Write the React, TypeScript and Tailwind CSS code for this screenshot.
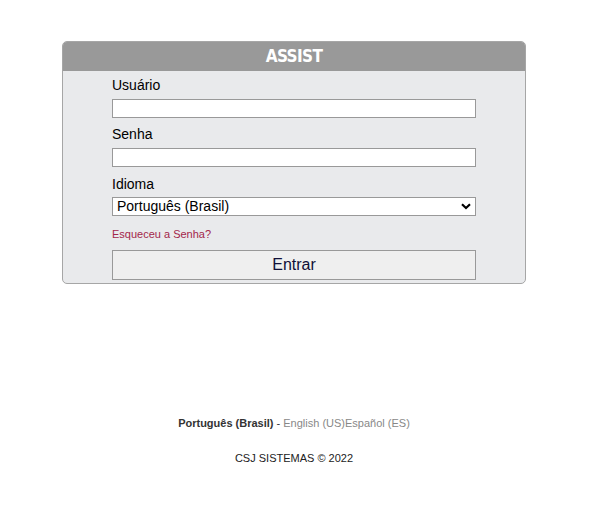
import React from 'react';

const App = () => {
  return (
    <div className="min-h-[532px] w-full bg-white font-['Liberation_Sans',Arial,sans-serif] text-black">
      <div className="pt-[41px]">
        {/* Login card */}
        <div className="ml-[62px] w-[464px] rounded-[5px] border border-[#a6a6a6] bg-[#e9eaec] overflow-hidden">
          <div className="h-[29px] bg-[#999999] flex items-center justify-center">
            <span className="font-['DejaVu_Sans_Condensed','DejaVu_Sans',sans-serif] font-bold text-[17px] text-white tracking-[-0.6px] leading-none">
              ASSIST
            </span>
          </div>
          <form className="px-[49px] pt-[6px] pb-[3px] flex flex-col" onSubmit={(e) => e.preventDefault()}>
            <label className="text-[14px] leading-[17px] h-[17px]">Usuário</label>
            <input type="text" className="mt-[5px] h-[19px] w-full bg-white border border-[#999] outline-none" />
            <label className="mt-[8px] text-[14px] leading-[17px] h-[17px]">Senha</label>
            <input type="password" className="mt-[5px] h-[19px] w-full bg-white border border-[#999] outline-none" />
            <label className="mt-[9px] text-[14px] leading-[17px] h-[17px]">Idioma</label>
            <div className="relative mt-[4px] h-[19px] w-full bg-white border border-[#999]">
              <span className="absolute left-[4px] top-0 text-[14px] leading-[17px] text-black">Português (Brasil)</span>
              <svg className="absolute right-[4px] top-[5px]" width="10" height="7" viewBox="0 0 10 7">
                <path d="M1 1.2 L5 5 L9 1.2" fill="none" stroke="#000" strokeWidth="2.2" />
              </svg>
            </div>
            <a href="#" className="mt-[12px] text-[11px] leading-[13px] text-[#a3264a] no-underline">
              Esqueceu a Senha?
            </a>
            <button type="submit" className="mt-[9px] h-[30px] w-full bg-[#efefef] border border-[#999] text-[16px] text-[#101038]">
              Entrar
            </button>
          </form>
        </div>

        {/* Footer */}
        <div className="mt-[133px] flex flex-col items-center text-[11px] leading-[13px]">
          <p className="ml-[-5px]">
            <span className="font-bold text-[#333]">Português (Brasil)</span>
            <span className="text-[#333]"> - </span>
            <a href="#" className="text-[#888]">English (US)</a>
            <a href="#" className="text-[#888]">Español (ES)</a>
          </p>
          <p className="mt-[22px] ml-[-5px] text-[#222]">CSJ SISTEMAS © 2022</p>
        </div>
      </div>
    </div>
  );
};

export default App;
